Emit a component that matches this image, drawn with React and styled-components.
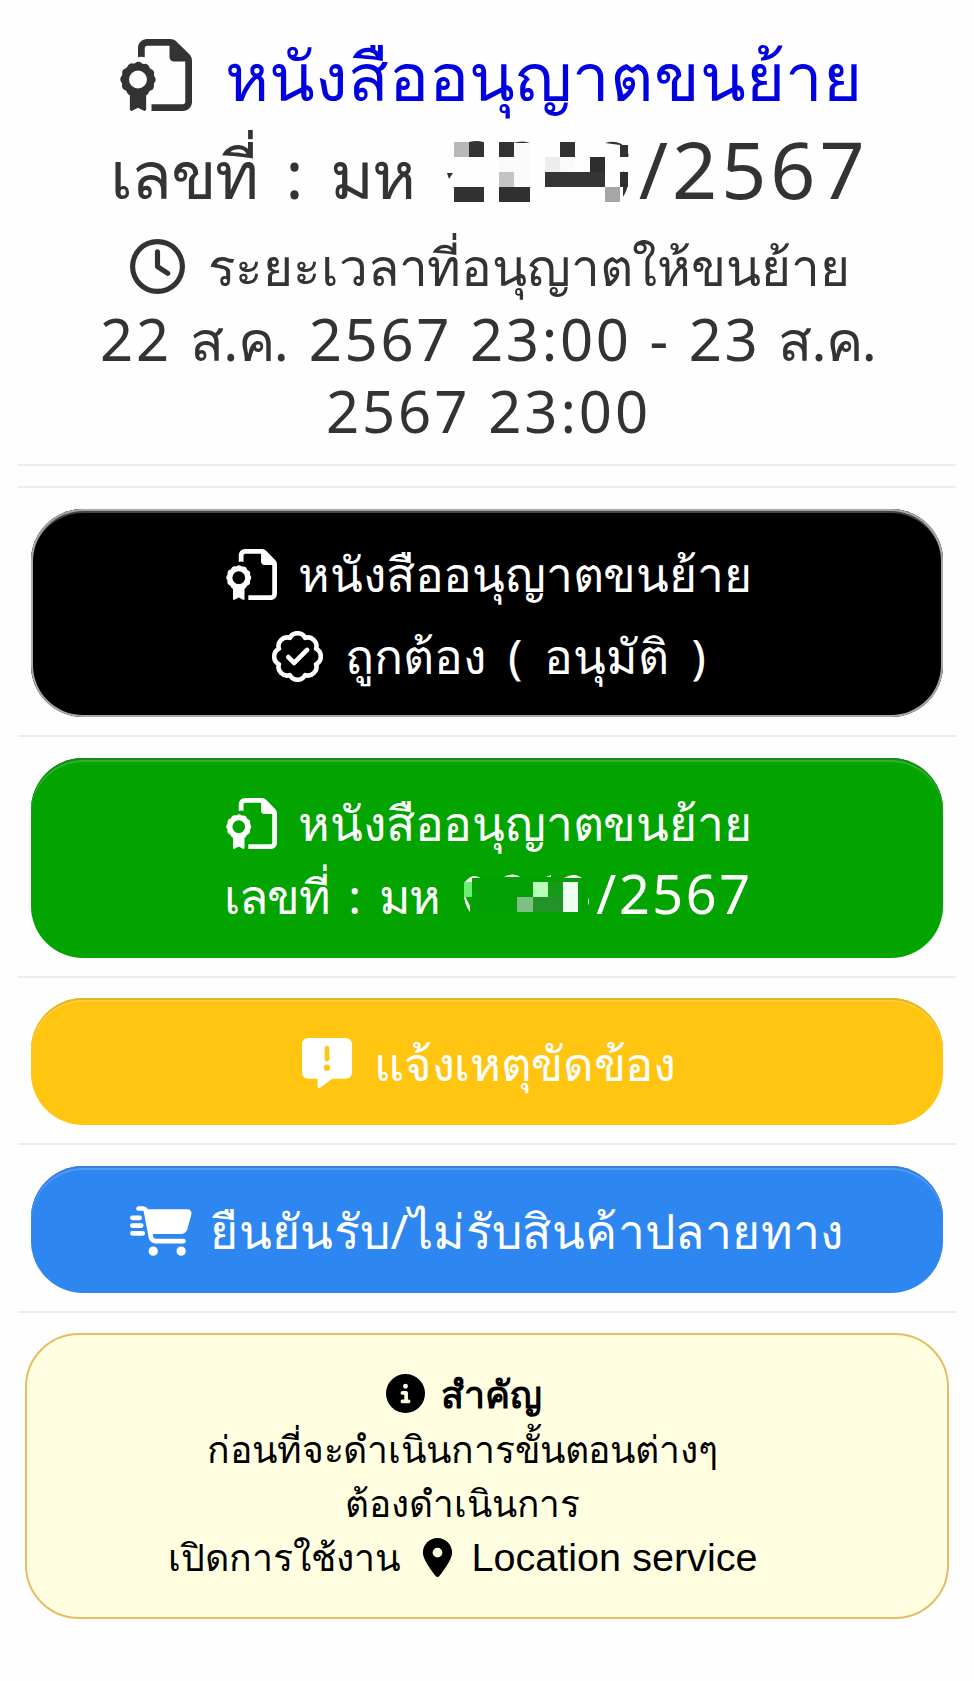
import React from "react";
import styled, { createGlobalStyle } from "styled-components";
import { FaRegClock, FaCircleInfo, FaLocationDot } from "react-icons/fa6";

const GlobalStyle = createGlobalStyle`
  body {
    margin: 0;
    background: #fefefe;
    font-family: "Noto Sans", sans-serif;
    color: #333;
  }
`;

const Page = styled.main`
  box-sizing: border-box;
  width: 974px;
  min-height: 1681px;
  padding: 27px 18px 0;
`;

const Header = styled.header`
  margin-bottom: 17px;
`;

const Row = styled.div`
  display: flex;
  justify-content: center;
  align-items: baseline;
  height: ${(p) => p.$h}px;
  line-height: ${(p) => p.$h}px;
  margin-top: ${(p) => p.$top || 0}px;
  padding-left: ${(p) => p.$shift || 0}px;
  white-space: pre;

  svg {
    flex: none;
    align-self: center;
  }
`;

const Text = styled.span`
  font-size: ${(p) => p.$size}px;
  font-weight: ${(p) => p.$weight || 400};
  letter-spacing: ${(p) => p.$track || 0}px;
  word-spacing: ${(p) => p.$word || 0}px;
  margin-left: ${(p) => p.$gap || 0}px;
`;

const TitleText = styled(Text)`
  color: #0000e0;
`;

const LatinText = styled(Text)`
  font-family: "Liberation Sans", Arial, sans-serif;
`;

const Mosaic = styled.svg`
  && {
    align-self: flex-start;
    margin: ${(p) => p.$margin};
  }
`;

const Divider = styled.hr`
  height: 2px;
  margin: ${(p) => p.$top || 0}px 0 0;
  border: 0;
  background: #ececec;
`;

const Button = styled.button`
  display: flex;
  flex-direction: column;
  justify-content: flex-start;
  align-items: stretch;
  box-sizing: border-box;
  width: 912px;
  height: ${(p) => p.$height}px;
  margin: ${(p) => p.$margin};
  padding: ${(p) => p.$pad}px 0 0;
  border: 0;
  border-radius: 52px;
  background: ${(p) => p.$bg};
  box-shadow: ${(p) => p.$edge};
  color: #fff;
  font-family: inherit;
`;

const Notice = styled.section`
  box-sizing: border-box;
  width: 924px;
  height: 286px;
  margin: 20px 7px 0;
  padding: 31px 49px 0 0;
  border: 2px solid #e8bc62;
  border-radius: 54px;
  background: #fffee0;
  color: #000;
`;

const PinSlot = styled.span`
  display: flex;
  align-self: center;
  justify-content: center;
  width: 30px;
  margin: 0 19px 0 22px;
`;

function CertificateIcon({ size }) {
  return (
    <svg width={size} height={size} viewBox="0 0 512 512" fill="currentColor">
      <path d="M128 64C128 28.7 156.7 0 192 0H357.5c17 0 33.3 6.7 45.3 18.7l90.5 90.5c12 12 18.7 28.3 18.7 45.3V448c0 35.3-28.7 64-64 64H224V464H448c8.8 0 16-7.2 16-16V160H384c-17.7 0-32-14.3-32-32V48H192c-8.8 0-16 7.2-16 16v66l-24-4-24 4z" />
      <circle cx="128" cy="288" r="91" fill="none" stroke="currentColor" strokeWidth="54" />
      <circle cx="128" cy="288" r="101" fill="none" stroke="currentColor" strokeWidth="50" strokeLinecap="round" strokeDasharray="0.1 52.783" />
      <path d="M70 380H186V500c0 8-9 14-16 10l-42-22-42 22c-7 4-16-2-16-10z" />
    </svg>
  );
}

function BadgeCheckIcon({ size }) {
  return (
    <svg width={size} height={size} viewBox="0 0 512 512" fill="none" stroke="currentColor" strokeWidth="48" strokeLinecap="round" strokeLinejoin="round">
      <path d="M175.6 62A90 90 0 0 1 336.4 62A90 90 0 0 1 450 175.6A90 90 0 0 1 450 336.4A90 90 0 0 1 336.4 450A90 90 0 0 1 175.6 450A90 90 0 0 1 62 336.4A90 90 0 0 1 62 175.6A90 90 0 0 1 175.6 62z" transform="translate(10 10) scale(.961)" />
      <path d="M164 262l58 58 130-130" />
    </svg>
  );
}

function MessageAlertIcon({ size }) {
  return (
    <svg width={size} height={size} viewBox="0 0 512 512" fill="currentColor" fillRule="evenodd">
      <path d="M64 0C28.7 0 0 28.7 0 64V352c0 35.3 28.7 64 64 64h96v80c0 6.1 3.4 11.6 8.8 14.3s11.9 2.1 16.8-1.5L309.3 416H448c35.3 0 64-28.7 64-64V64c0-35.3-28.7-64-64-64H64zM256 80c13.3 0 24 10.7 24 24V216c0 13.3-10.7 24-24 24s-24-10.7-24-24V104c0-13.3 10.7-24 24-24zM288 304a32 32 0 1 1-64 0 32 32 0 1 1 64 0z" />
    </svg>
  );
}

function FastCartIcon() {
  return (
    <svg width="62" height="50" viewBox="0 0 640 512" fill="currentColor">
      <path transform="translate(64 0)" d="M0 24C0 10.7 10.7 0 24 0H69.5c22 0 41.5 12.8 50.6 32h411c26.3 0 45.5 25 38.6 50.4l-41 152.3c-8.5 31.4-37 53.3-69.5 53.3H170.7l5.4 28.5c2.2 11.3 12.1 19.5 23.6 19.5H488c13.3 0 24 10.7 24 24s-10.7 24-24 24H199.7c-34.6 0-64.3-24.6-70.7-58.5L77.4 54.5c-.7-3.8-4-6.5-7.9-6.5H24C10.7 48 0 37.3 0 24zM128 464a48 48 0 1 1 96 0 48 48 0 1 1-96 0zm336-48a48 48 0 1 1 0 96 48 48 0 1 1 0-96z" />
      <path d="M24 120H100M24 200H116M24 280H132" stroke="currentColor" strokeWidth="48" strokeLinecap="round" />
    </svg>
  );
}

const DARK_TILES = [
  [7, 1, 15, 15, "#b8b8b8"], [22, 1, 15, 15, "#333"], [52, 1, 15, 15, "#333"],
  [67, 2, 16, 44, "#fafafa"], [52, 16, 15, 15, "#fafafa"], [52, 31, 15, 15, "#c4c4c4"],
  [113, 1, 15, 15, "#333"], [98, 16, 15, 15, "#ededed"], [113, 16, 15, 15, "#fafafa"],
  [143, 16, 15, 15, "#2e2e2e"], [98, 31, 60, 15, "#353535"],
  [7, 46, 30, 15, "#323232"], [52, 46, 31, 15, "#303030"],
  [158, 46, 15, 15, "#a6a6a6"], [173, 4, 8, 12, "#333"], [173, 31, 8, 15, "#2e2e2e"],
];

const GREEN_TILES = [
  [2, 8, 8, 15, "#6bf075"], [10, 4, 116, 34, "#049f06"],
  [71, 8, 15, 15, "#b9ffbb"], [55, 23, 16, 15, "#80bf83"],
  [71, 23, 30, 15, "#239329"], [86, 8, 15, 15, "#169a1a"],
  [101, 8, 15, 30, "#edfff2"],
];

function Tiles({ data }) {
  return data.map(([x, y, w, h, c], i) => (
    <rect key={i} x={x} y={y} width={w} height={h} fill={c} shapeRendering="crispEdges" />
  ));
}

export default function App() {
  return (
    <>
      <GlobalStyle />
      <Page>
        <Header>
          <Row $h={96} $shift={8}>
            <CertificateIcon size={72} />
            <TitleText $size={67} $gap={33}>หนังสืออนุญาตขนย้าย</TitleText>
          </Row>
          <Row $h={92} $shift={4}>
            <Text $size={67} $track={-1.5} $word={12}>เลขที่ : มห</Text>
            <Mosaic width="184" height="62" viewBox="0 0 184 62" $margin="18px 0 0 32px">
              <path d="M0 32h6l-4 6zM22 1q8-2 14 0zM66 2q10-3 17 0zM158 2q14-4 22 6l2 8-9-12zM176 30q10 10 0 26z" fill="#333" />
              <Tiles data={DARK_TILES} />
            </Mosaic>
            <Text $size={79} $track={3.9} $gap={8}>/2567</Text>
          </Row>
          <Row $h={70} $top={16} $shift={5}>
            <FaRegClock size={55} />
            <Text $size={51.4} $track={-0.15} $gap={23}>ระยะเวลาที่อนุญาตให้ขนย้าย</Text>
          </Row>
          <Row $h={72} $top={2} $shift={2}>
            <Text $size={58} $track={2.9}>22 </Text>
            <Text $size={56} $track={-0.8}>ส.ค.</Text>
            <Text $size={58} $track={2.7} $gap={3}> 2567 23:00 - 23 </Text>
            <Text $size={56} $track={-0.8}>ส.ค.</Text>
          </Row>
          <Row $h={72} $shift={3}>
            <Text $size={58} $track={2.9}>2567 23:00</Text>
          </Row>
        </Header>

        <Divider />
        <Divider $top={20} />

        <Button $height={208} $pad={24} $margin="21px 13px 18px" $bg="#000" $edge="inset 0 0 0 2px #a8a8a8, inset 0 3px 0 1px #444">
          <Row $h={82} $shift={4}>
            <CertificateIcon size={51} />
            <Text $size={48} $track={-0.2} $gap={21}>หนังสืออนุญาตขนย้าย</Text>
          </Row>
          <Row $h={82} $shift={4}>
            <BadgeCheckIcon size={51} />
            <Text $size={48} $word={9.5} $gap={22}>ถูกต้อง ( อนุมัติ )</Text>
          </Row>
        </Button>
        <Divider />

        <Button $height={200} $pad={30} $margin="21px 13px 18px" $bg="#03a400" $edge="inset 0 2px 0 #128c12, inset 0 4px 0 #33b033">
          <Row $h={70} $shift={4}>
            <CertificateIcon size={51} />
            <Text $size={48} $track={-0.2} $gap={21}>หนังสืออนุญาตขนย้าย</Text>
          </Row>
          <Row $h={71} $shift={3}>
            <Text $size={48} $track={-1.2} $word={7.5}>เลขที่ : มห</Text>
            <Mosaic width="130" height="42" viewBox="0 0 130 42" $margin="16px 0 0 22px">
              <path d="M3 8q9-12 20 0-10-5-16 2zM2 20q0 10 6 18l0-6zM42 3q10-5 16 0zM84 3l5-2v2zM102 4q12-7 21 3zM127 24q1 8-5 13z" fill="#fff" />
              <Tiles data={GREEN_TILES} />
            </Mosaic>
            <Text $size={54} $track={2.6} $gap={4}>/2567</Text>
          </Row>
        </Button>
        <Divider />

        <Button $height={127} $pad={30} $margin="20px 13px 18px" $bg="#ffc511" $edge="inset 0 2px 0 #e5b520, inset 0 4px 0 #ffcf3c">
          <Row $h={70} $shift={4}>
            <MessageAlertIcon size={50} />
            <Text $size={47} $track={-0.3} $gap={22}>แจ้งเหตุขัดข้อง</Text>
          </Row>
        </Button>
        <Divider />

        <Button $height={127} $pad={30} $margin="21px 13px 18px" $bg="#2e87f0" $edge="inset 0 2px 0 #3a7fd4, inset 0 4px 0 #4c9bf8">
          <Row $h={70}>
            <FastCartIcon />
            <Text $size={48} $track={0.4} $gap={18}>ยืนยันรับ/ไม่รับสินค้าปลายทาง</Text>
          </Row>
        </Button>
        <Divider />

        <Notice>
          <Row $h={55} $shift={3}>
            <FaCircleInfo size={39} />
            <Text $size={37.5} $weight={700} $gap={16}>สำคัญ</Text>
          </Row>
          <Row $h={55}>
            <Text $size={37.3} $track={-0.1}>ก่อนที่จะดำเนินการขั้นตอนต่างๆ</Text>
          </Row>
          <Row $h={54}>
            <Text $size={37}>ต้องดำเนินการ</Text>
          </Row>
          <Row $h={54}>
            <Text $size={37.5}>เปิดการใช้งาน</Text>
            <PinSlot>
              <FaLocationDot size={39} />
            </PinSlot>
            <LatinText $size={39.6}>Location service</LatinText>
          </Row>
        </Notice>
      </Page>
    </>
  );
}
